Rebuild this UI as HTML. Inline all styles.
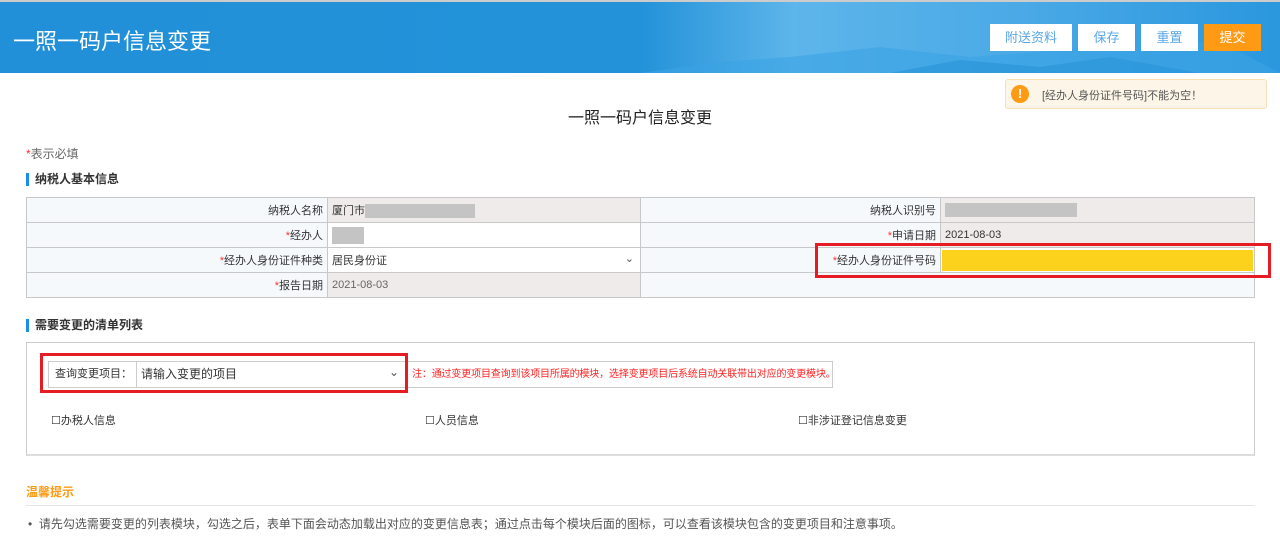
<!DOCTYPE html>
<html><head><meta charset="utf-8"><style>
*{margin:0;padding:0;box-sizing:border-box}
body{width:1280px;height:539px;overflow:hidden;background:#fff;font-family:"Liberation Sans","Noto Sans CJK SC",sans-serif;font-size:12px;color:#333;position:relative}
.abs{position:absolute;white-space:nowrap}
.hdr{left:0;top:0;width:1280px;height:73px;border-top:2px solid #ccc;background:linear-gradient(90deg,#2190d8 0%,#2392d9 50%,#5db5ea 62%,#4aa9e6 80%,#2a97de 100%);overflow:hidden}
.btn{top:24px;height:27px;background:#fff;color:#5aa7e6;font-size:13px;text-align:center;line-height:27px}
td{border:1px solid #c8c8c8;height:25px;padding:0 4px;white-space:nowrap}
.l{background:#f5f9fc;text-align:right;color:#333}
.g{background:#efebeb}
.r{color:#f33}
.gb{display:inline-block;background:#c4c4c4;height:14px;vertical-align:middle}
.sec{font-weight:bold;font-size:12px;border-left:3px solid #1a8fe8;padding-left:6px;line-height:13px}
</style></head><body>
<div class="abs hdr">
<svg class="abs" style="left:640px;top:0" width="640" height="71"><path d="M0 71 L80 60 L150 55 L240 45 L330 55 L400 50 L470 42 L560 40 L600 50 L640 71Z" fill="#3ba4e4" opacity=".6"/><path d="M250 71 L320 58 L400 65 L470 55 L560 71Z" fill="#2b95da" opacity=".7"/></svg>
<div class="abs" style="left:13px;top:22px;color:#fff;font-size:22px">一照一码户信息变更</div>
</div>
<div class="abs btn" style="left:990px;width:82px">附送资料</div>
<div class="abs btn" style="left:1078px;width:57px">保存</div>
<div class="abs btn" style="left:1141px;width:57px">重置</div>
<div class="abs btn" style="left:1204px;width:57px;background:#fe9a14;color:#fff">提交</div>
<div class="abs" style="left:1005px;top:79px;width:262px;height:30px;background:#fdf6e8;border:1px solid #f8dfb7;border-radius:3px">
<div class="abs" style="left:5px;top:5px;width:18px;height:18px;border-radius:50%;background:#fe9a14;color:#fff;font-weight:bold;text-align:center;line-height:18px;font-size:13px">!</div>
<div class="abs" style="left:36px;top:7px;font-size:11px;color:#555">[经办人身份证件号码]不能为空！</div></div>
<div class="abs" style="left:0;width:1280px;top:104px;text-align:center;font-size:16px;color:#222">一照一码户信息变更</div>
<div class="abs" style="left:26px;top:145px;color:#666"><span class="r">*</span>表示必填</div>
<div class="abs sec" style="left:26px;top:173px">纳税人基本信息</div>
<table class="abs" style="left:26px;top:197px;width:1229px;border-collapse:collapse;font-size:11px">
<tr><td class="l" style="width:301px">纳税人名称</td><td class="g" style="width:313px">厦门市<span class="gb" style="width:110px"></span></td><td class="l" style="width:300px">纳税人识别号</td><td class="g"><span class="gb" style="width:132px"></span></td></tr>
<tr><td class="l"><span class="r">*</span>经办人</td><td><span class="gb" style="width:32px;height:17px"></span></td><td class="l"><span class="r">*</span>申请日期</td><td class="g">2021-08-03</td></tr>
<tr><td class="l"><span class="r">*</span>经办人身份证件种类</td><td style="position:relative">居民身份证<span style="position:absolute;right:6px;top:4px;color:#555">&#8964;</span></td><td class="l"><span class="r">*</span>经办人身份证件号码</td><td style="padding:1px"><div style="background:#fdd21d;height:21px"></div></td></tr>
<tr><td class="l"><span class="r">*</span>报告日期</td><td class="g" style="color:#666">2021-08-03</td><td class="l" colspan="2"></td></tr>
</table>
<div class="abs" style="left:815px;top:243px;width:456px;height:35px;border:3px solid #e51c23"></div>
<div class="abs sec" style="left:26px;top:319px">需要变更的清单列表</div>
<div class="abs" style="left:26px;top:342px;width:1229px;height:114px;border:1px solid #ccc;border-bottom:2px solid #ddd"></div>
<div class="abs" style="left:48px;top:361px;width:360px;height:27px;border:1px solid #ccc"><div class="abs" style="left:0;top:0;width:88px;height:25px;border-right:1px solid #ccc;line-height:25px;padding-left:6px;font-size:11px">查询变更项目：</div><div class="abs" style="left:92px;top:0;line-height:25px">请输入变更的项目</div><div class="abs" style="right:8px;top:3px;color:#555">&#8964;</div></div>
<div class="abs" style="left:408px;top:361px;width:425px;height:27px;border:1px solid #ccc;border-left:none;color:#f22;font-size:10px;letter-spacing:-0.15px;line-height:25px;padding-left:4px;overflow:hidden">注：通过变更项目查询到该项目所属的模块，选择变更项目后系统自动关联带出对应的变更模块。</div>
<div class="abs" style="left:40px;top:353px;width:368px;height:40px;border:3px solid #e51c23"></div>
<div class="abs" style="left:51px;top:412px;font-size:11px">☐办税人信息</div>
<div class="abs" style="left:425px;top:412px;font-size:11px">☐人员信息</div>
<div class="abs" style="left:798px;top:412px;font-size:11px">☐非涉证登记信息变更</div>
<div class="abs" style="left:26px;top:483px;color:#fe9a14;font-weight:bold;font-size:12px">温馨提示</div>
<div class="abs" style="left:26px;top:505px;width:1229px;border-top:1px solid #e5e5e5"></div>
<div class="abs" style="left:28px;top:515px;color:#555;font-size:12px">•&nbsp; 请先勾选需要变更的列表模块，勾选之后，表单下面会动态加载出对应的变更信息表；通过点击每个模块后面的图标，可以查看该模块包含的变更项目和注意事项。</div>
</body></html>
